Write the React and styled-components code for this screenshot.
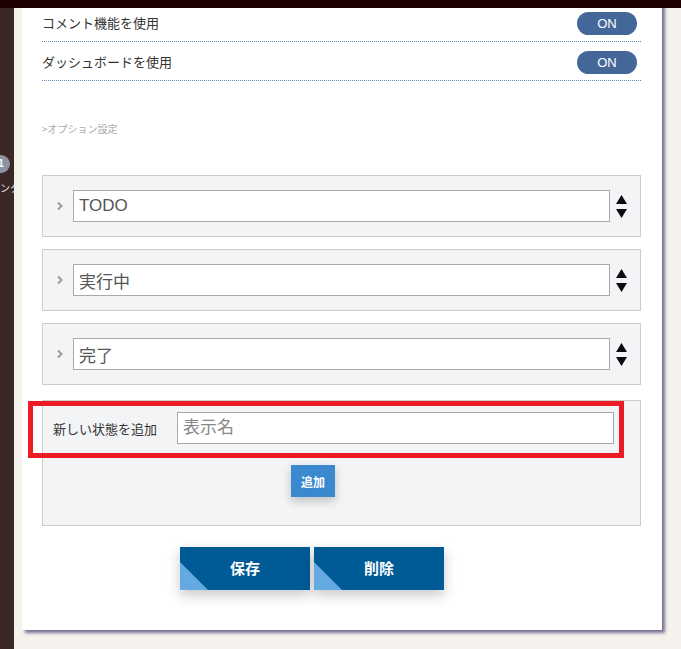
import React from 'react'
import styled, { createGlobalStyle } from 'styled-components'

const GlobalStyle = createGlobalStyle`
  html, body {
    margin: 0;
    padding: 0;
    background: #f5f2ee;
    font-family: "Liberation Sans", "Noto Sans CJK JP", sans-serif;
  }
`

const toggles = ['コメント機能を使用', 'ダッシュボードを使用']
const states = ['TODO', '実行中', '完了']

const Chevron = () => (
  <svg width="8" height="10" viewBox="0 0 8 10">
    <polyline points="2,1.5 5.5,5 2,8.5" fill="none" stroke="#9a9a9a" strokeWidth="2" />
  </svg>
)

const SortArrows = () => (
  <svg width="11" height="26" viewBox="0 0 11 26">
    <polygon points="5.5,1 11,10 0,10" fill="#0b0b12" />
    <polygon points="0,15 11,15 5.5,24" fill="#0b0b12" />
  </svg>
)

const App = () => {
  return (
    <Page>
      <GlobalStyle />
      <TopBar />
      <Body>
        <Sidebar>
          <SideInner>
            <SideBadge>1</SideBadge>
            <SideLabel>センター</SideLabel>
          </SideInner>
        </Sidebar>
        <Panel>
          {toggles.map((t) => (
            <ToggleRow key={t}>
              <span>{t}</span>
              <Pill>ON</Pill>
            </ToggleRow>
          ))}
          <OptionTitle>&gt;オプション設定</OptionTitle>
          <StateList>
            {states.map((s) => (
              <StateBox key={s}>
                <ChevronCell><Chevron /></ChevronCell>
                <TextInput defaultValue={s} />
                <ArrowCell><SortArrows /></ArrowCell>
              </StateBox>
            ))}
          </StateList>
          <AddBox>
            <AddRow>
              <AddLabel>新しい状態を追加</AddLabel>
              <TextInput placeholder="表示名" />
            </AddRow>
            <AddButtonRow>
              <SmallButton>追加</SmallButton>
            </AddButtonRow>
            <Highlight />
          </AddBox>
          <Actions>
            <BigButton>保存</BigButton>
            <BigButton>削除</BigButton>
          </Actions>
        </Panel>
      </Body>
    </Page>
  )
}

export default App

const Page = styled.div`
  min-height: 100vh;
  display: flex;
  flex-direction: column;
`

const TopBar = styled.div`
  height: 8px;
  background: #1c0000;
  position: relative;
  z-index: 2;
`

const Body = styled.div`
  flex: 1;
  display: flex;
  align-items: flex-start;
`

const Sidebar = styled.div`
  width: 14px;
  align-self: stretch;
  min-height: 641px;
  background: #3b2723;
  overflow: hidden;
  flex-shrink: 0;
`

const SideInner = styled.div`
  width: 60px;
  margin-left: -46px;
  padding-top: 147px;
  display: flex;
  flex-direction: column;
`

const SideBadge = styled.div`
  width: 18px;
  height: 18px;
  margin-left: 38px;
  border-radius: 50%;
  background: #8c93a5;
  color: #fff;
  font-size: 10px;
  font-weight: bold;
  line-height: 18px;
  text-align: center;
`

const SideLabel = styled.div`
  margin-top: 9px;
  padding-left: 36px;
  font-size: 10px;
  line-height: 12px;
  color: #e8e4ef;
  white-space: nowrap;
  font-family: "Noto Sans CJK JP", sans-serif;
`

const Panel = styled.div`
  width: 640px;
  margin-left: 8px;
  margin-top: -5px;
  padding: 0 21px 40px 20px;
  box-sizing: border-box;
  background: #fff;
  box-shadow: 3px 3px 3px rgba(80, 72, 120, 0.75);
`

const ToggleRow = styled.div`
  display: flex;
  align-items: center;
  justify-content: space-between;
  padding: 9px 4px 6px 0;
  border-bottom: 1px dotted #5f86bf;
  font-size: 13px;
  line-height: 23px;
  color: #333;
  font-family: "Noto Sans CJK JP", sans-serif;

  span {
    margin-top: -3px;
  }
`

const Pill = styled.div`
  width: 60px;
  height: 23px;
  border-radius: 12px;
  background: #446799;
  color: #fff;
  font-size: 13px;
  line-height: 23px;
  text-align: center;
  font-family: "Liberation Sans", sans-serif;
`

const OptionTitle = styled.div`
  margin-top: 41px;
  font-size: 10px;
  line-height: 14px;
  color: #aaa;
  font-family: "Noto Sans CJK JP", sans-serif;
`

const StateList = styled.div`
  margin-top: 39px;
  display: flex;
  flex-direction: column;
  gap: 12px;
`

const StateBox = styled.div`
  height: 60px;
  display: flex;
  align-items: center;
  border: 1px solid #cdcdcd;
  background: #f3f4f6;
`

const ChevronCell = styled.div`
  width: 30px;
  display: flex;
  justify-content: center;
  padding-left: 4px;
  box-sizing: border-box;
`

const TextInput = styled.input`
  flex: 1;
  min-width: 0;
  height: 32px;
  box-sizing: border-box;
  border: 1px solid #aaa;
  background: #fff;
  padding: 0 5px;
  font-size: 17px;
  color: #555;
  font-family: "Liberation Sans", "Noto Sans CJK JP", sans-serif;
  outline: none;
  border-radius: 0;

  &::placeholder {
    color: #888;
  }
`

const ArrowCell = styled.div`
  width: 30px;
  box-sizing: border-box;
  display: flex;
  padding: 2px 0 0 6px;
`

const AddBox = styled.div`
  position: relative;
  margin-top: 15px;
  height: 126px;
  box-sizing: border-box;
  border: 1px solid #cdcdcd;
  background: #f3f4f6;
  padding: 11px 26px 0 10px;
`

const AddRow = styled.div`
  display: flex;
  align-items: center;
  gap: 16px;
`

const AddLabel = styled.div`
  width: 108px;
  font-size: 13px;
  color: #333;
  white-space: nowrap;
  font-family: "Noto Sans CJK JP", sans-serif;
`

const AddButtonRow = styled.div`
  display: flex;
  justify-content: center;
  margin-top: 21px;
  padding-right: 41px;
`

const SmallButton = styled.button`
  width: 44px;
  height: 32px;
  border: none;
  background: #3a89cf;
  color: #fff;
  font-size: 12px;
  font-weight: bold;
  font-family: "Noto Sans CJK JP", sans-serif;
  padding: 0;
  box-shadow: 0 4px 10px rgba(0, 0, 0, 0.22);
`

const Highlight = styled.div`
  position: absolute;
  left: -15px;
  top: 0;
  width: 596px;
  height: 57px;
  box-sizing: border-box;
  border: 5px solid #ed1c24;
  pointer-events: none;
`

const Actions = styled.div`
  display: flex;
  gap: 4px;
  margin-top: 21px;
  padding-left: 138px;
`

const BigButton = styled.button`
  position: relative;
  overflow: hidden;
  width: 130px;
  height: 43px;
  border: none;
  padding: 0 0 3px;
  background: #005a96;
  color: #fff;
  font-size: 15px;
  font-weight: bold;
  font-family: "Noto Sans CJK JP", sans-serif;
  box-shadow: 0 5px 12px rgba(0, 0, 0, 0.22);

  &::before {
    content: '';
    position: absolute;
    left: 0;
    bottom: 0;
    width: 28px;
    height: 28px;
    background: #65a9e2;
    clip-path: polygon(0 0, 100% 100%, 0 100%);
  }
`
